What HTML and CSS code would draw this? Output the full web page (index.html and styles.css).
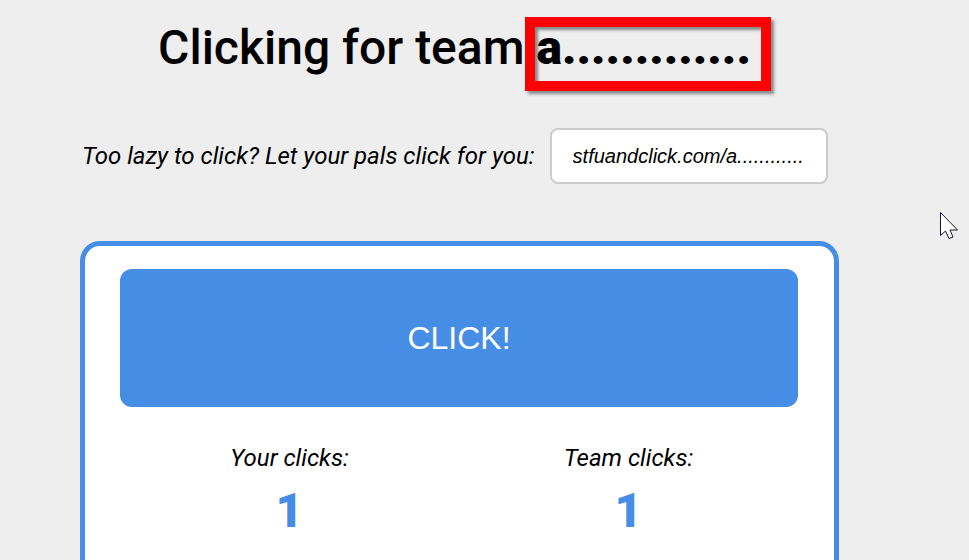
FILE: index.html
```html
<!DOCTYPE html>
<html lang="en">
<head>
<meta charset="utf-8">
<title>Clicking for team</title>
<link rel="stylesheet" href="styles.css">
</head>
<body>
<main class="page">
  <h1 class="title">Clicking for team <span class="team">a.............</span></h1>
  <div class="invite">
    <label for="link">Too lazy to click? Let your pals click for you:</label>
    <input id="link" class="link" type="text" readonly value="stfuandclick.com/a............">
  </div>
  <section class="card">
    <button class="click" type="button">CLICK!</button>
    <dl class="scores">
      <div class="score"><dt>Your clicks:</dt><dd>1</dd></div>
      <div class="score"><dt>Team clicks:</dt><dd>1</dd></div>
    </dl>
  </section>
</main>
<svg class="cursor" width="20" height="30" viewBox="0 0 20 30" aria-hidden="true">
  <path d="M1.5 1.5V24.500L6.500 20L10 27.500L14 26L11 19H18.500Z" fill="#fff" stroke="#15152a" stroke-width="1"/>
</svg>
</body>
</html>
```
FILE: styles.css
```css
* { box-sizing: border-box; }
body {
  margin: 0;
  height: 100vh;
  overflow: hidden;
  background: #eee;
  color: #000;
  font: 24px/28px Roboto, sans-serif;
}
.page { padding: 17px 130px 0 80px; }
.title {
  display: flex;
  justify-content: center;
  align-items: baseline;
  margin: 0;
  padding-left: 10px;
  font-size: 48px;
  line-height: 42px;
  font-weight: 500;
}
.team {
  padding: 0 10px 12px 2px;
  border: 10px solid #f00;
  font-weight: 900;
  box-shadow: 3px 3px 3px #888, inset 3px 3px 3px #888;
}
.invite {
  display: flex;
  align-items: center;
  gap: 15px;
  margin-top: 37px;
  padding-left: 2px;
  font-style: italic;
}
.link {
  width: 278px;
  height: 56px;
  padding: 0 21px;
  border: 2px solid #ccc;
  border-radius: 8px;
  background: #fff;
  color: #000;
  font: italic 20px "Liberation Sans", Arial, sans-serif;
}
.card {
  margin-top: 57px;
  padding: 23px 36px 60px 35px;
  border: 5px solid #468ee5;
  border-radius: 20px;
  background: #fff;
}
.click {
  display: block;
  width: 100%;
  height: 138px;
  border: 0;
  border-radius: 12px;
  background: #468ee5;
  color: #fff;
  font: 32px "Liberation Sans", Arial, sans-serif;
}
.scores {
  display: grid;
  grid-template-columns: 1fr 1fr;
  margin: 37px 0 0;
  text-align: center;
}
.score dt { font-style: italic; }
.score dd {
  margin: 11px 0 0;
  color: #468ee5;
  font-size: 48px;
  line-height: 56px;
  font-weight: 900;
}
.cursor { position: absolute; left: 939px; top: 211px; }
```
